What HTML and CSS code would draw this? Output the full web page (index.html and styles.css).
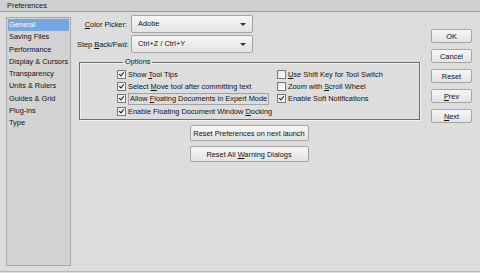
FILE: index.html
```html
<!DOCTYPE html>
<html lang="en">
<head>
    <meta charset="UTF-8">
    <title>Preferences</title>
    <link rel="stylesheet" href="styles.css">
</head>
<body>

    <div class="titlebar">Preferences</div>

    <div class="window">
        <ul class="sidebar">
            <li class="active">General</li>
            <li>Saving Files</li>
            <li>Performance</li>
            <li>Display &amp; Cursors</li>
            <li>Transparency</li>
            <li>Units &amp; Rulers</li>
            <li>Guides &amp; Grid</li>
            <li>Plug-ins</li>
            <li>Type</li>
        </ul>

        <div class="content">
            <div class="field">
                <label><u>C</u>olor Picker:</label>
                <div class="select">Adobe<span class="arrow"></span></div>
            </div>
            <div class="field">
                <label>Step <u>B</u>ack/Fwd:</label>
                <div class="select">Ctrl+Z / Ctrl+Y<span class="arrow"></span></div>
            </div>

            <fieldset class="options">
                <legend>Options</legend>
                <div class="checks">
                    <div class="check on"><span class="box"></span><span>Show <u>T</u>ool Tips</span></div>
                    <div class="check"><span class="box"></span><span><u>U</u>se Shift Key for Tool Switch</span></div>
                    <div class="check on"><span class="box"></span><span>Select <u>M</u>ove tool after committing text</span></div>
                    <div class="check"><span class="box"></span><span>Zoom with <u>S</u>croll Wheel</span></div>
                    <div class="check on"><span class="box"></span><span class="focus">Allow <u>F</u>loating Documents in Expert Mode</span></div>
                    <div class="check on"><span class="box"></span><span>Enable Soft Notifications</span></div>
                    <div class="check on"><span class="box"></span><span>Enable Floating Document Window <u>D</u>ocking</span></div>
                </div>
            </fieldset>

            <div class="resets">
                <button>Reset Preferences on next launch</button>
                <button>Reset All <u>W</u>arning Dialogs</button>
            </div>
        </div>

        <div class="actions">
            <button>OK</button>
            <button>Cancel</button>
            <button>Reset</button>
            <button><u>P</u>rev</button>
            <button><u>N</u>ext</button>
        </div>
    </div>

</body>
</html>
```

FILE: styles.css
```css
body {
    margin: 0;
    width: 480px;
    height: 273px;
    overflow: hidden;
    background-color: #dddddd;
    font-family: 'Liberation Sans', Arial, sans-serif;
    font-size: 7.4px;
    color: #111;
}

u {
    text-decoration: underline;
}

.titlebar {
    height: 11px;
    line-height: 11px;
    padding-left: 7px;
    background-color: #d0d0d0;
    border-bottom: 1px solid #9c9c9c;
    color: #111;
}

.window {
    display: flex;
    height: 259px;
    border-bottom: 1px solid #b8b8b8;
}

.sidebar {
    list-style: none;
    margin: 5px 0 0 6px;
    padding: 1px;
    width: 65px;
    height: 249px;
    box-sizing: border-box;
    background-color: #d3d3d3;
    border: 1px solid #a9a9a9;
}

.sidebar li {
    height: 12.3px;
    line-height: 12.3px;
    padding-left: 1px;
    white-space: nowrap;
}

.sidebar li.active {
    background-color: #74a7e2;
    color: #fff;
}

.content {
    width: 344px;
    padding: 3px 0 0 6px;
}

.field {
    display: flex;
    align-items: center;
    gap: 4px;
    margin-bottom: 2px;
}

.field label {
    width: 50px;
    text-align: right;
    white-space: nowrap;
}

.select {
    position: relative;
    width: 122px;
    height: 18px;
    box-sizing: border-box;
    line-height: 16px;
    padding-left: 6px;
    border: 1px solid #a3a3a3;
    border-radius: 2px;
    background: linear-gradient(#f6f6f6, #e4e4e4);
}

.arrow {
    position: absolute;
    right: 6px;
    top: 7px;
    border-left: 3px solid transparent;
    border-right: 3px solid transparent;
    border-top: 3px solid #333;
}

.options {
    margin: 4px 1px 0 2px;
    padding: 1px 0 2px 37px;
    border: 1px solid #6e6e6e;
    box-shadow: inset 1px 1px 0 #f2f2f2, 1px 1px 0 #f2f2f2;
}

.options legend {
    padding: 0 2px;
    margin-left: 6px;
    line-height: 10px;
}

.checks {
    display: grid;
    grid-template-columns: 160px auto;
    grid-auto-rows: 12.3px;
    align-items: center;
}

.check {
    display: flex;
    align-items: center;
    gap: 2px;
    white-space: nowrap;
}

.box {
    position: relative;
    width: 9px;
    height: 9px;
    box-sizing: border-box;
    border: 1px solid #7a7a7a;
    background: linear-gradient(135deg, #e8e8e8, #fbfbfb);
}

.check.on .box::after {
    content: "";
    position: absolute;
    left: 2px;
    top: 0;
    width: 2px;
    height: 4px;
    border-right: 1.5px solid #222;
    border-bottom: 1.5px solid #222;
    transform: rotate(40deg);
}

.focus {
    border: 1px solid #a2a2a2;
    padding: 0 1px;
    line-height: 10px;
}

.resets {
    display: flex;
    flex-direction: column;
    align-items: center;
    gap: 5px;
    margin-top: 5px;
}

button {
    font-family: inherit;
    font-size: 7.4px;
    color: #111;
    padding: 0;
    border: 1px solid #a5a5a5;
    border-radius: 2px;
    background: linear-gradient(#f7f7f7, #e3e3e3);
}

.resets button {
    width: 119px;
    height: 16px;
}

.actions {
    display: flex;
    flex-direction: column;
    gap: 6px;
    width: 41px;
    margin-left: 10px;
    padding-top: 17px;
}

.actions button {
    height: 14px;
}
```
